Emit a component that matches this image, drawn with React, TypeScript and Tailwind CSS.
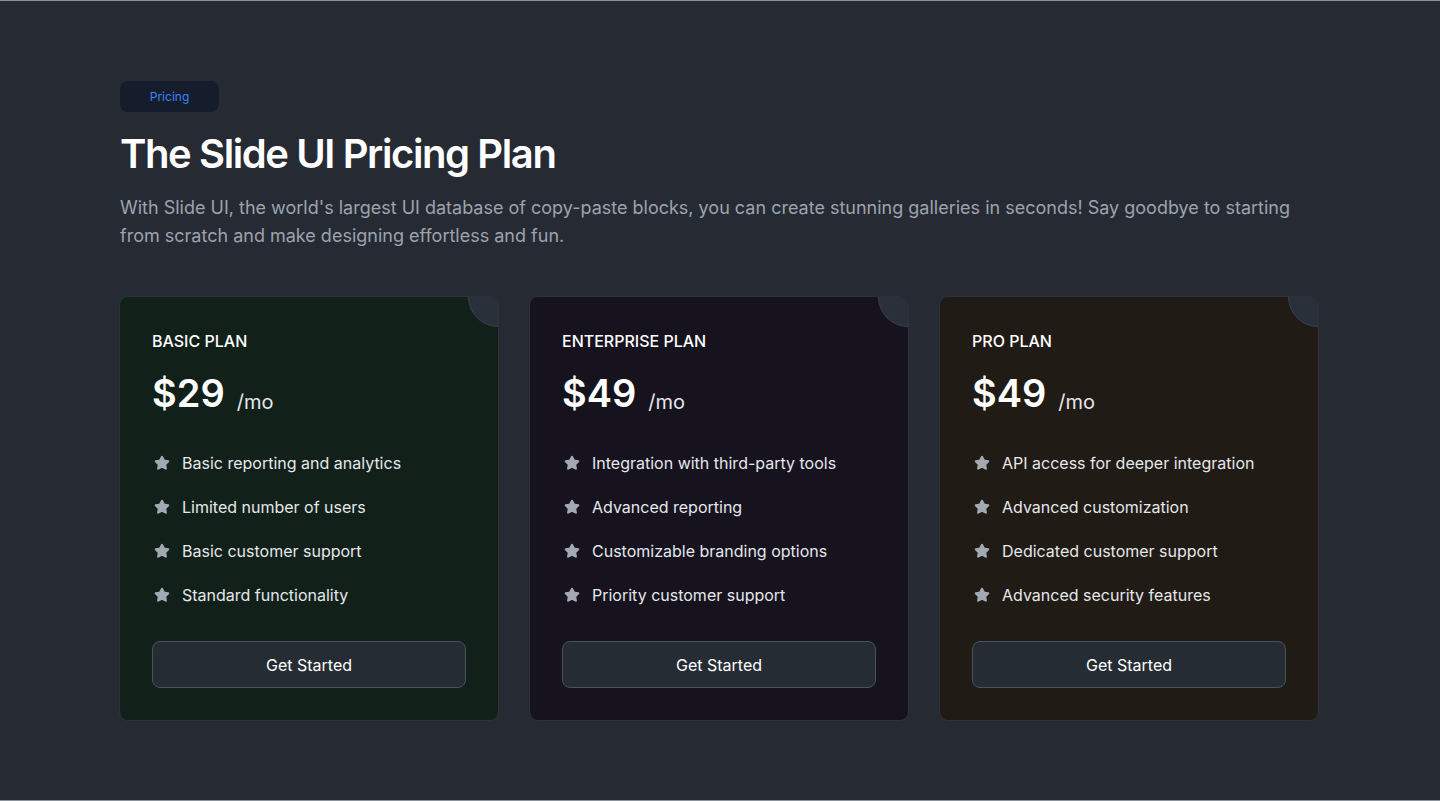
import { Star } from 'lucide-react'

const plans = [
  {
    name: 'Basic Plan',
    price: '$29',
    bg: 'bg-[#11211a]',
    features: ['Basic reporting and analytics', 'Limited number of users', 'Basic customer support', 'Standard functionality'],
  },
  {
    name: 'Enterprise Plan',
    price: '$49',
    bg: 'bg-[#16131f]',
    features: ['Integration with third-party tools', 'Advanced reporting', 'Customizable branding options', 'Priority customer support'],
  },
  {
    name: 'Pro Plan',
    price: '$49',
    bg: 'bg-[#201b15]',
    features: ['API access for deeper integration', 'Advanced customization', 'Dedicated customer support', 'Advanced security features'],
  },
]

function PlanCard({ plan }: { plan: (typeof plans)[number] }) {
  return (
    <div className={`relative overflow-hidden rounded-lg ring-1 ring-[#2c323b] ${plan.bg} px-8 pt-8 pb-8`}>
      <div className="absolute -top-[30px] -right-[30px] h-[60px] w-[60px] rounded-full border border-[#3a414b] bg-[#2a3039]" />
      <h3 className="text-base font-medium uppercase leading-6 text-white">{plan.name}</h3>
      <div className="mt-4 flex items-baseline gap-3">
        <span className="text-[38px] font-semibold leading-[48px] text-white">{plan.price}</span>
        <span className="relative top-[2px] text-xl text-gray-200">/mo</span>
      </div>
      <ul className="mt-[34px] space-y-5">
        {plan.features.map((f) => (
          <li key={f} className="flex items-center gap-3 pl-[2px] text-base leading-6 text-gray-200">
            <Star className="h-4 w-4 fill-[#a3a9b2] text-[#a3a9b2]" />
            {f}
          </li>
        ))}
      </ul>
      <button className="mt-[34px] h-[47px] w-full rounded-lg border border-[#4a525c] bg-[#262c34] text-base font-normal text-white">
        Get Started
      </button>
    </div>
  )
}

export default function App() {
  return (
    <div className="min-h-[801px] border-y border-[#8b929c] bg-[#262b33] font-['Inter',sans-serif]">
      <div className="px-[120px] pt-20 pb-20">
        <span className="inline-flex h-[31px] w-[99px] items-center justify-center rounded-lg bg-[#151d2d] text-xs text-[#3b82f6]">
          Pricing
        </span>
        <h1 className="mt-[18px] text-[40px] font-semibold leading-[48px] tracking-[-0.035em] text-white">The Slide UI Pricing Plan</h1>
        <p className="mt-4 max-w-[1180px] text-lg leading-7 text-[#9ca3af]">
          With Slide UI, the world's largest UI database of copy-paste blocks, you can create stunning galleries in seconds! Say goodbye to starting from scratch and make designing effortless and fun.
        </p>
        <div className="mt-[47px] grid w-[1198px] grid-cols-3 gap-8">
          {plans.map((p) => (
            <PlanCard key={p.name} plan={p} />
          ))}
        </div>
      </div>
    </div>
  )
}
